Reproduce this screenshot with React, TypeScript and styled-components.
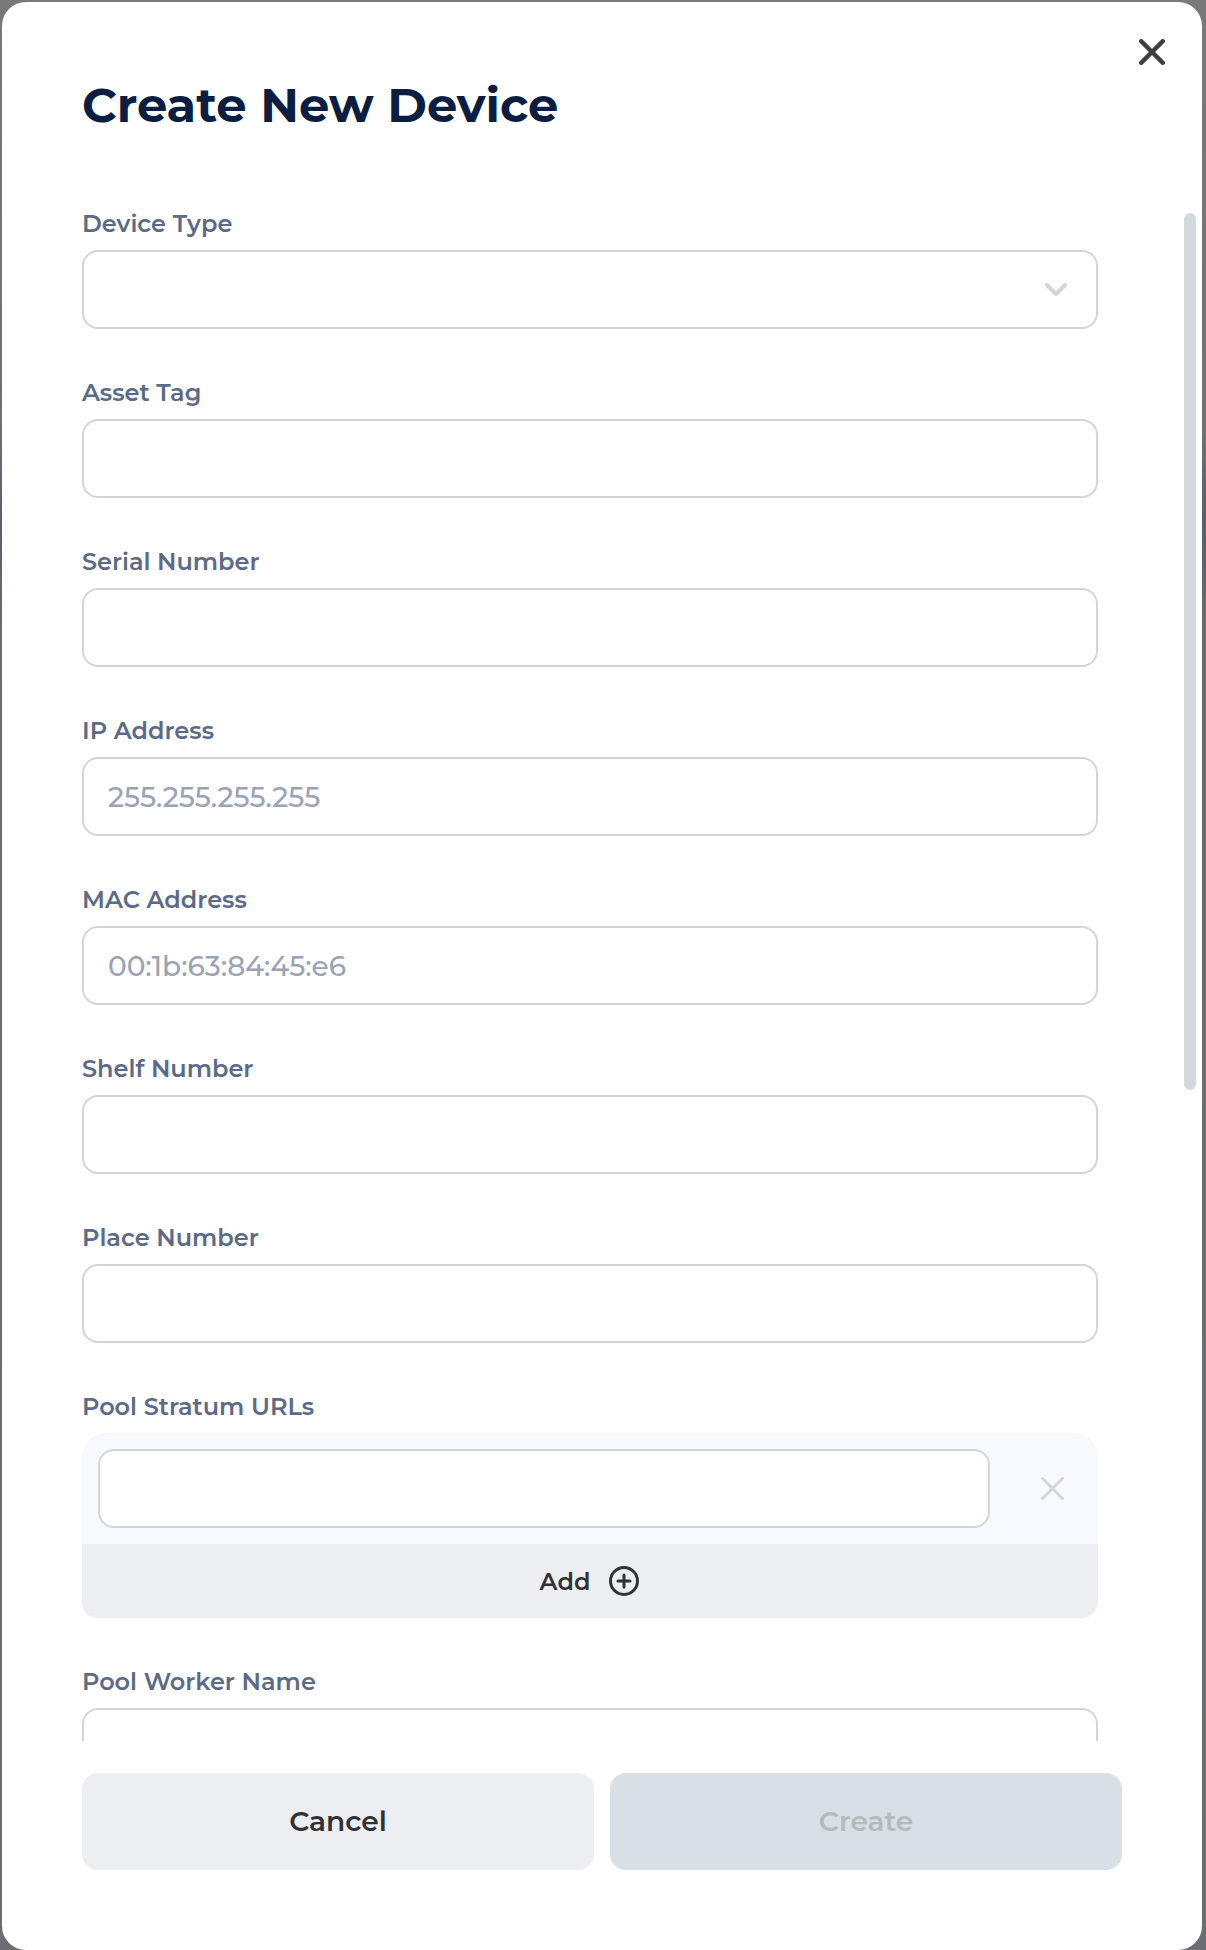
import React, { useState } from "react";
import styled, { createGlobalStyle } from "styled-components";

const colors = {
  navy: "#0b1e42",
  label: "#5b6a88",
  placeholder: "#9aa3b5",
  border: "#d5d5d5",
  ink: "#303234",
  grey: "#edeef2",
  tint: "#f6faff",
};

const GlobalStyle = createGlobalStyle`
  *, *::before, *::after { box-sizing: border-box; }
  body { margin: 0; }
  body, button, input, select {
    font-family: Montserrat, Inter, "Open Sans", sans-serif;
  }
`;

const Overlay = styled.div`
  height: 100vh;
  padding: 2px 4px 0 2px;
  background: linear-gradient(#797979 0, #717171 22%, #56606f 27%, #6c6c6e 32%, #6d6e73 100%);
`;

const Dialog = styled.section`
  position: relative;
  display: flex;
  flex-direction: column;
  height: 100%;
  background: #ffffff;
  border-radius: 24px;
`;

const CloseButton = styled.button`
  position: absolute;
  top: 24px;
  right: 24px;
  display: grid;
  place-items: center;
  width: 52px;
  height: 52px;
  padding: 0;
  border: 0;
  background: none;
  color: #3c3e41;
`;

const Title = styled.h1`
  margin: 0;
  padding: 73px 80px 74px;
  font-size: 48px;
  font-weight: 700;
  line-height: 60px;
  color: ${colors.navy};
`;

const Form = styled.form`
  display: flex;
  flex: 1;
  flex-direction: column;
  min-height: 0;
`;

const Body = styled.div`
  display: flex;
  flex: 1;
  gap: 86px;
  min-height: 0;
  padding: 0 6px 0 80px;
`;

const Fields = styled.div`
  display: flex;
  flex: 1;
  flex-direction: column;
  gap: 49px;
  min-width: 0;
  overflow-y: auto;
  scrollbar-width: none;
`;

const ScrollTrack = styled.div`
  flex: none;
  width: 12px;
  padding-top: 4px;
`;

const ScrollThumb = styled.div`
  height: 57.4%;
  border-radius: 6px;
  background: #d3dadd;
`;

const Field = styled.div`
  display: flex;
  flex: none;
  flex-direction: column;
  gap: 11px;
`;

const Label = styled.label`
  font-size: 24px;
  font-weight: 600;
  line-height: 30px;
  color: ${colors.label};
`;

const Input = styled.input`
  width: 100%;
  min-width: 0;
  height: 79px;
  padding: 0 24px;
  border: 2px solid ${colors.border};
  border-radius: 16px;
  outline: 0;
  background: #ffffff;
  font-size: 28px;
  font-weight: 500;
  color: ${colors.navy};

  &::placeholder {
    color: ${colors.placeholder};
    opacity: 1;
  }
`;

const SelectBox = styled.div`
  position: relative;

  svg {
    position: absolute;
    top: 32px;
    right: 30px;
    color: ${colors.border};
    pointer-events: none;
  }
`;

const Select = styled(Input).attrs({ as: "select" })`
  display: block;
  appearance: none;
`;

const ListRow = styled.div`
  display: flex;
  gap: 16px;
  padding: 16px 0 16px 16px;
  border-radius: 24px 24px 0 0;
  background: ${colors.tint};
`;

const RemoveButton = styled.button`
  display: grid;
  flex: none;
  place-items: center;
  width: 92px;
  padding: 0;
  border: 0;
  background: none;
  color: ${colors.border};
`;

const AddButton = styled.button`
  display: flex;
  align-items: center;
  justify-content: center;
  gap: 18px;
  width: 100%;
  height: 74px;
  border: 0;
  border-radius: 0 0 16px 16px;
  background: ${colors.grey};
  font-size: 24px;
  font-weight: 600;
  color: ${colors.ink};
`;

const Footer = styled.footer`
  display: flex;
  gap: 16px;
  padding: 32px 80px 80px;
`;

const ActionButton = styled.button<{ $primary?: boolean }>`
  flex: 1;
  height: 97px;
  padding: 0 24px 2px;
  border: 0;
  border-radius: 16px;
  background: ${(p) => (p.$primary ? "#d8dfe5" : colors.grey)};
  font-size: 28px;
  font-weight: 600;
  color: ${(p) => (p.$primary ? "#b6babd" : colors.ink)};
`;

function CrossIcon({ size, stroke }: { size: number; stroke: number }) {
  const a = stroke / 2;
  const b = size - a;
  return (
    <svg width={size} height={size} fill="none" stroke="currentColor" strokeWidth={stroke} strokeLinecap="round" aria-hidden="true">
      <path d={`M${a} ${a}L${b} ${b}M${b} ${a}L${a} ${b}`} />
    </svg>
  );
}

function ChevronIcon() {
  return (
    <svg width="24" height="16" viewBox="0 0 24 16" fill="none" stroke="currentColor" strokeWidth="4" strokeLinecap="round" strokeLinejoin="round" aria-hidden="true">
      <path d="M3 3L12 12L21 3" />
    </svg>
  );
}

function PlusCircleIcon() {
  return (
    <svg width="32" height="32" viewBox="0 0 32 32" fill="none" stroke="currentColor" strokeWidth="3" strokeLinecap="round" aria-hidden="true">
      <circle cx="16" cy="16" r="13.5" />
      <path d="M16 10V22M10 16H22" />
    </svg>
  );
}

const textFields = [
  { id: "asset-tag", label: "Asset Tag" },
  { id: "serial-number", label: "Serial Number" },
  { id: "ip-address", label: "IP Address", placeholder: "255.255.255.255" },
  { id: "mac-address", label: "MAC Address", placeholder: "00:1b:63:84:45:e6" },
  { id: "shelf-number", label: "Shelf Number" },
  { id: "place-number", label: "Place Number" },
];

export default function App() {
  const [urls, setUrls] = useState([""]);

  return (
    <Overlay>
      <GlobalStyle />
      <Dialog role="dialog" aria-labelledby="dialog-title">
        <CloseButton type="button" aria-label="Close">
          <CrossIcon size={26} stroke={4.5} />
        </CloseButton>
        <Title id="dialog-title">Create New Device</Title>
        <Form onSubmit={(e) => e.preventDefault()}>
          <Body>
            <Fields>
              <Field>
                <Label htmlFor="device-type">Device Type</Label>
                <SelectBox>
                  <Select id="device-type" />
                  <ChevronIcon />
                </SelectBox>
              </Field>
              {textFields.map((f) => (
                <Field key={f.id}>
                  <Label htmlFor={f.id}>{f.label}</Label>
                  <Input id={f.id} placeholder={f.placeholder} />
                </Field>
              ))}
              <Field>
                <Label htmlFor="pool-url-0">Pool Stratum URLs</Label>
                <div>
                  {urls.map((url, i) => (
                    <ListRow key={i}>
                      <Input
                        id={`pool-url-${i}`}
                        value={url}
                        onChange={(e: React.ChangeEvent<HTMLInputElement>) =>
                          setUrls(urls.map((u, n) => (n === i ? e.target.value : u)))
                        }
                      />
                      <RemoveButton
                        type="button"
                        aria-label="Remove URL"
                        disabled={urls.length === 1}
                        onClick={() => setUrls(urls.filter((_, n) => n !== i))}
                      >
                        <CrossIcon size={23} stroke={3} />
                      </RemoveButton>
                    </ListRow>
                  ))}
                  <AddButton type="button" onClick={() => setUrls([...urls, ""])}>
                    Add
                    <PlusCircleIcon />
                  </AddButton>
                </div>
              </Field>
              <Field>
                <Label htmlFor="pool-worker">Pool Worker Name</Label>
                <Input id="pool-worker" />
              </Field>
            </Fields>
            <ScrollTrack>
              <ScrollThumb />
            </ScrollTrack>
          </Body>
          <Footer>
            <ActionButton type="button">Cancel</ActionButton>
            <ActionButton type="submit" $primary disabled>
              Create
            </ActionButton>
          </Footer>
        </Form>
      </Dialog>
    </Overlay>
  );
}
